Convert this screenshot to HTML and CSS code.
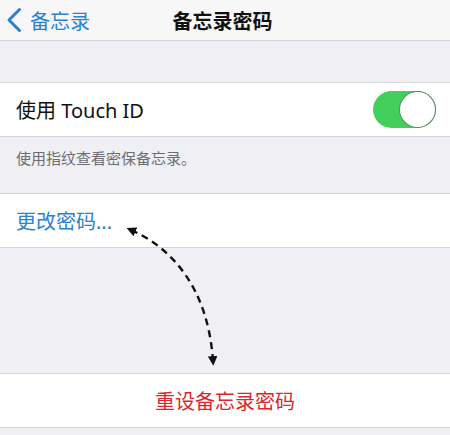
FILE: index.html
```html
<!DOCTYPE html>
<html lang="zh-CN">

<head>
    <meta charset="UTF-8">
    <title>备忘录密码</title>
    <link rel="stylesheet" href="styles.css">
</head>

<body>
    <div class="screen">
        <div class="nav">
            <a class="back" href="#">
                <svg class="chevron" width="16" height="26" viewBox="0 0 16 26">
                    <path d="M13.5 2.5 L3 13 L13.5 23.5" fill="none" stroke="#2a7fd0" stroke-width="3" stroke-linecap="round" stroke-linejoin="round"/>
                </svg>
                <span>备忘录</span>
            </a>
            <div class="title">备忘录密码</div>
        </div>

        <div class="group first">
            <div class="cell">
                <span class="label">使用 Touch ID</span>
                <span class="switch on"><span class="knob"></span></span>
            </div>
        </div>
        <div class="note">使用指纹查看密保备忘录。</div>

        <div class="group">
            <div class="cell">
                <span class="link">更改密码...</span>
            </div>
        </div>

        <div class="group last">
            <div class="cell center">
                <span class="danger">重设备忘录密码</span>
            </div>
        </div>

        <!-- dashed hint arrow between the two password actions -->
        <svg class="hint" width="450" height="435" viewBox="0 0 450 435">
            <defs>
                <marker id="head" viewBox="0 0 10 10" refX="5" refY="5" markerWidth="4" markerHeight="4" orient="auto-start-reverse">
                    <path d="M0 0 L10 5 L0 10 z" fill="#111"/>
                </marker>
            </defs>
            <path d="M131 230 C 172 248, 208 288, 213 361" fill="none" stroke="#111" stroke-width="2.4" stroke-dasharray="7 5" marker-start="url(#head)" marker-end="url(#head)"/>
        </svg>
    </div>
</body>

</html>
```

FILE: styles.css
```css
html,
body {
    margin: 0;
    padding: 0;
}

body {
    font-family: "Noto Sans", "Noto Sans CJK SC", sans-serif;
    background: #efeff4;
}

.screen {
    width: 450px;
    height: 435px;
    position: relative;
    overflow: hidden;
    background: #efeff4;
}

.nav {
    height: 40px;
    background: #f7f7f8;
    border-bottom: 1px solid #d4d4d8;
    display: grid;
    grid-template-columns: 1fr auto 1fr;
    align-items: center;
}

.nav .back {
    display: flex;
    align-items: center;
    gap: 8px;
    padding-left: 6px;
    color: #2a82d0;
    font-size: 20px;
    text-decoration: none;
}

.nav .chevron {
    display: block;
}

.nav .title {
    grid-column: 2;
    font-size: 20px;
    font-weight: 700;
    color: #111;
    margin-right: 5px;
}

.group {
    background: #fff;
    border-top: 1px solid #d6d6da;
    border-bottom: 1px solid #d6d6da;
}

.group.first {
    margin-top: 41px;
}

.group.last {
    margin-top: 125px;
}

.cell {
    height: 53px;
    padding: 0 16px;
    display: flex;
    align-items: center;
    justify-content: space-between;
}

.cell.center {
    justify-content: center;
}

.label {
    font-size: 20px;
    color: #111;
}

.link {
    font-size: 20px;
    color: #2a82d0;
}

.danger {
    font-size: 20px;
    color: #d8282e;
}

.note {
    height: 56px;
    padding: 10px 16px 0;
    box-sizing: border-box;
    font-size: 15px;
    color: #6d6d72;
}

.switch {
    width: 63px;
    height: 37px;
    border-radius: 19px;
    background: #44cf5c;
    display: flex;
    align-items: center;
    justify-content: flex-end;
    margin-right: -2px;
}

.switch .knob {
    width: 35px;
    height: 35px;
    border-radius: 50%;
    background: #fff;
    margin-right: 1px;
    box-shadow: 0 0 0 1px #5a8a64;
}

.hint {
    position: absolute;
    left: 0;
    top: 0;
}
```
